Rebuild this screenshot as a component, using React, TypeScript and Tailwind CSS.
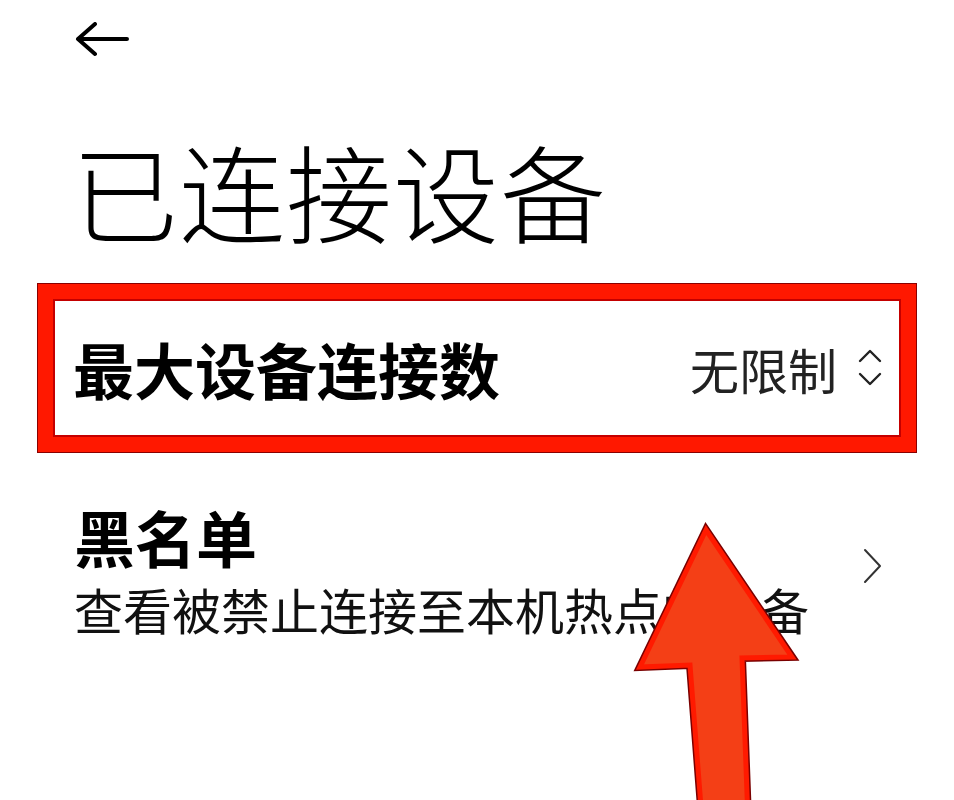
import React from "react";

const BackArrow = () => (
  <svg width="56" height="38" viewBox="0 0 56 38" fill="none" stroke="#000" strokeWidth="4" strokeLinecap="round" strokeLinejoin="round">
    <path d="M3 17h49M20 2L3 17l17 15" />
  </svg>
);

const UpDown = () => (
  <svg width="26" height="40" viewBox="0 0 26 40" fill="none" stroke="#222" strokeWidth="2.4" strokeLinecap="round" strokeLinejoin="round">
    <path d="M3 13L13 3l10 10M3 26l10 10 10-10" />
  </svg>
);

const ChevronRight = () => (
  <svg width="20" height="36" viewBox="0 0 20 36" fill="none" stroke="#333" strokeWidth="2" strokeLinecap="round" strokeLinejoin="round">
    <path d="M3 2l15 16L3 34" />
  </svg>
);

// big pointer arrow drawn over the list
const PointerArrow = () => {
  const pts = "76,10 162,137 112,138 118,300 72,300 60,145 10,147";
  return (
    <svg width="172" height="300" viewBox="0 0 172 300" className="absolute left-[630px] top-[520px]">
      <polygon points={pts} fill="none" stroke="#7a0000" strokeWidth="8" strokeLinejoin="miter" />
      <polygon points={pts} fill="#f43f16" stroke="#ff1a00" strokeWidth="5" strokeLinejoin="miter" />
    </svg>
  );
};

export default function App() {
  return (
    <div className="relative w-[954px] h-[800px] overflow-hidden bg-white text-black font-['Noto_Sans_CJK_SC','Noto_Sans',sans-serif]">
      <header className="pl-[75px] pt-[22px]">
        <BackArrow />
      </header>

      <h1 className="ml-[72px] mt-[76px] text-[106px] font-light leading-none tracking-[1px]">已连接设备</h1>

      <div className="mx-[38px] mt-[42px] h-[168px] border-[15px] border-[#ff1800] shadow-[0_0_0_1px_#8a0000,inset_0_0_0_2px_#c40000] flex items-center justify-between pl-[20px] pr-[18px]">
        <span className="text-[61px] font-bold leading-none">最大设备连接数</span>
        <div className="flex items-center gap-[20px]">
          <span className="text-[49px] leading-none text-[#222]">无限制</span>
          <UpDown />
        </div>
      </div>

      <div className="mt-[54px] pl-[74px] pr-[72px] flex items-center justify-between">
        <div>
          <div className="text-[61px] font-bold leading-none">黑名单</div>
          <div className="mt-[17px] text-[49px] leading-none text-[#111]">查看被禁止连接至本机热点的设备</div>
        </div>
        <div className="mb-[8px]">
          <ChevronRight />
        </div>
      </div>

      <PointerArrow />
    </div>
  );
}
